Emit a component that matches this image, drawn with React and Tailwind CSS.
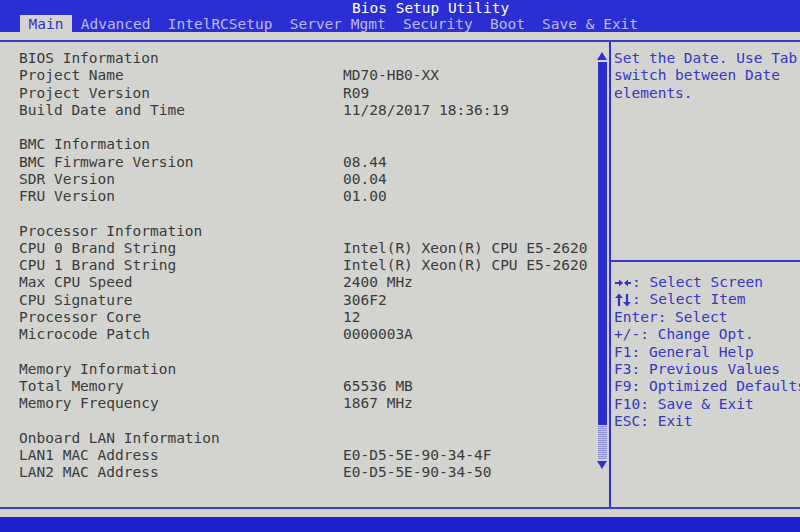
import React from 'react';

const font = { fontFamily: '"DejaVu Sans Mono", "Liberation Mono", monospace' };

const tabs = ['Main', 'Advanced', 'IntelRCSetup', 'Server Mgmt', 'Security', 'Boot', 'Save & Exit'];

const rows = [
    ['BIOS Information', ''],
    ['Project Name', 'MD70-HB0-XX'],
    ['Project Version', 'R09'],
    ['Build Date and Time', '11/28/2017 18:36:19'],
    null,
    ['BMC Information', ''],
    ['BMC Firmware Version', '08.44'],
    ['SDR Version', '00.04'],
    ['FRU Version', '01.00'],
    null,
    ['Processor Information', ''],
    ['CPU 0 Brand String', 'Intel(R) Xeon(R) CPU E5-2620'],
    ['CPU 1 Brand String', 'Intel(R) Xeon(R) CPU E5-2620'],
    ['Max CPU Speed', '2400 MHz'],
    ['CPU Signature', '306F2'],
    ['Processor Core', '12'],
    ['Microcode Patch', '0000003A'],
    null,
    ['Memory Information', ''],
    ['Total Memory', '65536 MB'],
    ['Memory Frequency', '1867 MHz'],
    null,
    ['Onboard LAN Information', ''],
    ['LAN1 MAC Address', 'E0-D5-5E-90-34-4F'],
    ['LAN2 MAC Address', 'E0-D5-5E-90-34-50'],
];

// arrow pair glyphs drawn as small svg
const LeftRight = () => (
    <svg width="18" height="12" viewBox="0 0 18 12" className="shrink-0">
        <line x1="1" y1="6" x2="6" y2="6" stroke="#3535c4" strokeWidth="2" />
        <polygon points="5,2.5 9,6 5,9.5" fill="#3535c4" />
        <polygon points="14,2.5 10,6 14,9.5" fill="#3535c4" />
        <line x1="13" y1="6" x2="17" y2="6" stroke="#3535c4" strokeWidth="2" />
    </svg>
);

const UpDown = () => (
    <svg width="18" height="14" viewBox="0 0 18 14" className="shrink-0">
        <polygon points="1,5 5,0.5 9,5" fill="#3535c4" />
        <line x1="5" y1="4" x2="5" y2="13" stroke="#3535c4" strokeWidth="2.2" />
        <line x1="13" y1="1" x2="13" y2="10" stroke="#3535c4" strokeWidth="2.2" />
        <polygon points="9,9 13,13.5 17,9" fill="#3535c4" />
    </svg>
);

const keys = [
    [LeftRight, ': Select Screen'],
    [UpDown, ': Select Item'],
    [null, 'Enter: Select'],
    [null, '+/-: Change Opt.'],
    [null, 'F1: General Help'],
    [null, 'F3: Previous Values'],
    [null, 'F9: Optimized Defaults'],
    [null, 'F10: Save & Exit'],
    [null, 'ESC: Exit'],
];

const App = () => {
    return (
        <div className="w-[800px] h-[532px] overflow-hidden bg-[#d3d4d0] text-[14.5px] leading-[17.25px] flex flex-col" style={font}>
            {/* header */}
            <div className="h-[32px] bg-[#2b2ed2] flex flex-col">
                <div className="h-[15px] pl-[352px] text-white leading-[17px] whitespace-pre">Bios Setup Utility</div>
                <div className="h-[17px] flex pl-[20px] whitespace-pre">
                    {tabs.map((tab, i) => (
                        <div
                            key={tab}
                            className={`px-[8.6px] leading-[18px] ${i === 0 ? 'bg-[#d3d4d0] text-[#3535c4]' : 'text-[#b9bae4]'}`}
                        >
                            {tab}
                        </div>
                    ))}
                </div>
            </div>
            <div className="h-[10px] border-b-2 border-[#3a3ccc]" />

            {/* body */}
            <div className="h-[465px] flex">
                <div className="w-[611px] border-r-2 border-[#2f31d0] flex">
                    <div className="w-[595px] pl-[19px] pt-[8px] text-[#3b3b3b] whitespace-pre">
                        {rows.map((row, i) =>
                            row ? (
                                <div key={i} className="flex h-[17.25px]">
                                    <span className="w-[324px]">{row[0]}</span>
                                    <span>{row[1]}</span>
                                </div>
                            ) : (
                                <div key={i} className="h-[17.25px]" />
                            )
                        )}
                    </div>
                    {/* scrollbar */}
                    <div className="w-[14px] flex flex-col items-center pt-[10px]">
                        <svg width="10" height="8" viewBox="0 0 10 8"><polygon points="5,0 10,8 0,8" fill="#3030cc" /></svg>
                        <div className="w-[9px] h-[363px] mt-[2px] bg-[#2a2dcf]" />
                        <div className="w-[9px] h-[34px] bg-[repeating-linear-gradient(0deg,#8e90d2_0px,#8e90d2_1px,#c5c6da_1px,#c5c6da_2px)]" />
                        <svg className="mt-[2px]" width="10" height="8" viewBox="0 0 10 8"><polygon points="0,0 10,0 5,8" fill="#3030cc" /></svg>
                    </div>
                </div>
                <div className="flex-1 flex flex-col text-[#3737c2] whitespace-pre overflow-hidden">
                    <div className="h-[220px] pl-[3px] pt-[8px] border-b-2 border-[#3a3ccc]">
                        <div>Set the Date. Use Tab</div>
                        <div>switch between Date</div>
                        <div>elements.</div>
                    </div>
                    <div className="pl-[3px] pt-[12px]">
                        {keys.map(([Icon, text], i) => (
                            <div key={i} className="h-[17.4px] flex items-center">
                                {Icon && <Icon />}
                                <span>{text}</span>
                            </div>
                        ))}
                    </div>
                </div>
            </div>

            {/* footer */}
            <div className="h-[2px] bg-[#3a3ccc]" />
            <div className="h-[8px]" />
            <div className="flex-1 bg-[#1e22cc]" />
        </div>
    );
};

export default App;
